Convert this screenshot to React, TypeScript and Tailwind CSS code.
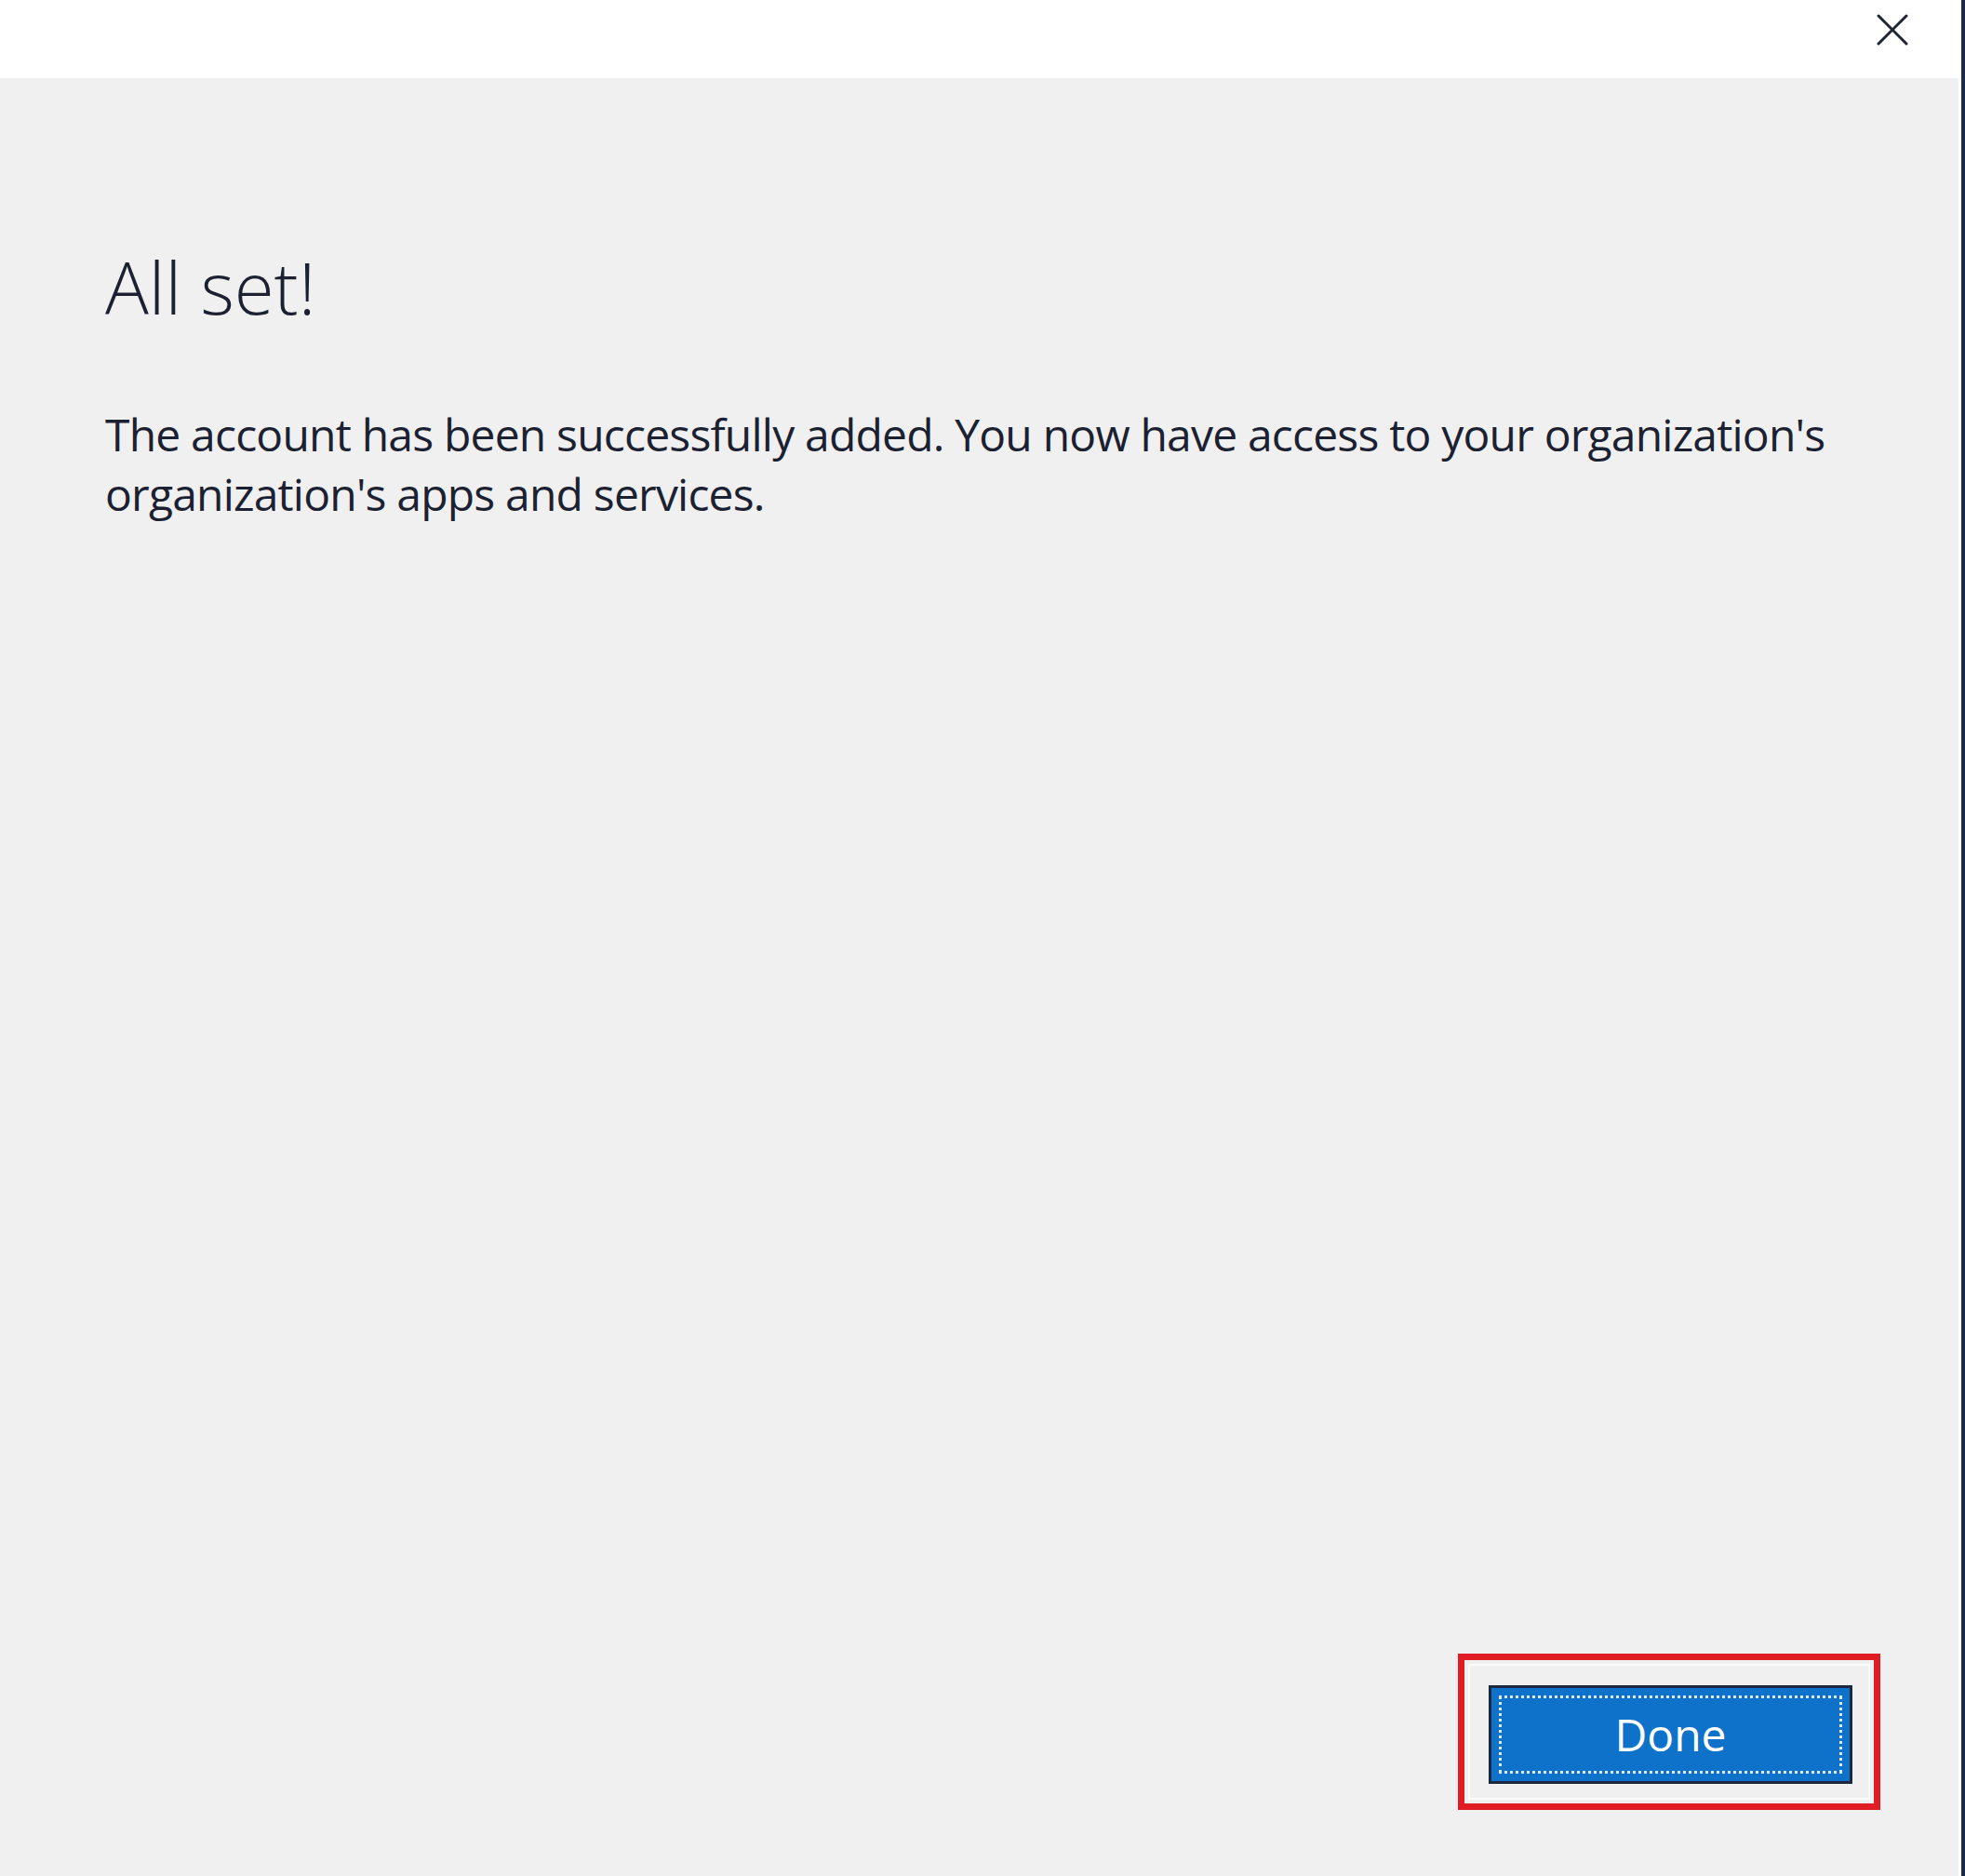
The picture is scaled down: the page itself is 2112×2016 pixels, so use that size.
import React from "react";

export default function App() {
  return (
    <div className="flex w-[2112px] h-[2016px] bg-[#f0f0f0]" style={{ fontFamily: '"Open Sans", "Noto Sans", sans-serif' }}>
      <div className="flex flex-1 flex-col">
        <div className="flex h-[84px] items-start justify-end bg-white pr-[54px] pt-[15px]">
          <svg width="34" height="34" viewBox="0 0 34 34" className="block">
            <path d="M2 2 L32 32 M32 2 L2 32" stroke="#1e2536" strokeWidth="3" strokeLinecap="round" fill="none" />
          </svg>
        </div>
        <div className="flex flex-1 flex-col bg-[#f0f0f0] pl-[113px]">
          <h1 className="mt-[185px] text-[78px] font-light leading-none text-[#1b2130]">All set!</h1>
          <p className="mt-[88px] text-[48px] leading-[64px] tracking-[-0.8px] text-[#1b2130]">
            The account has been successfully added. You now have access to your organization's
            <br />
            organization's apps and services.
          </p>
          <div className="mt-auto mb-[71px] mr-[84px] flex justify-end">
            <div className="border-[7px] border-[#e01c24] p-[4px]">
              <div className="border-2 border-[#fbfbfb] pt-[21px] pl-[20px] pr-[17px] pb-[15px]">
                <button className="relative flex h-[106px] w-[391px] items-center justify-center border-[3px] border-[#1c2840] bg-[#0e72cb] text-[48px] leading-none text-white">
                  <span className="absolute inset-[8px] border-[3px] border-dotted border-[#dfe8f5]" />
                  <span className="relative -mt-[1px]">Done</span>
                </button>
              </div>
            </div>
          </div>
        </div>
      </div>
      <div className="w-[3px] bg-white" />
      <div className="w-[4px] bg-[#1b2a47]" />
    </div>
  );
}
